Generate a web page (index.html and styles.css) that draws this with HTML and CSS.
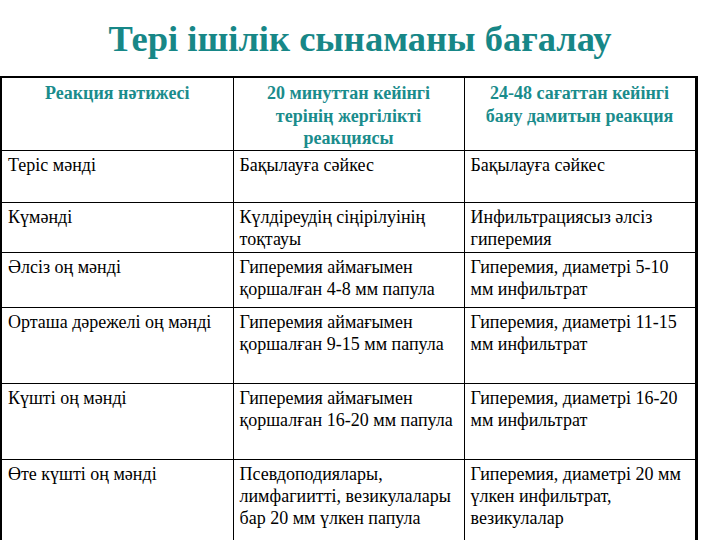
FILE: index.html
```html
<!DOCTYPE html>
<html lang="kk">
<head>
<meta charset="utf-8">
<title>Тері ішілік сынаманы бағалау</title>
<link rel="stylesheet" href="styles.css">
</head>
<body>
<h1 class="title">Тері ішілік сынаманы бағалау</h1>
<table class="grid">
  <colgroup><col class="c1"><col class="c2"><col class="c3"></colgroup>
  <tr class="r-head">
    <th>Реакция нәтижесі</th>
    <th>20 минуттан кейінгі<br>терінің жергілікті<br>реакциясы</th>
    <th>24-48 сағаттан кейінгі<br>баяу дамитын реакция</th>
  </tr>
  <tr class="r1">
    <td>Теріс мәнді</td>
    <td>Бақылауға сәйкес</td>
    <td>Бақылауға сәйкес</td>
  </tr>
  <tr class="r2">
    <td>Күмәнді</td>
    <td>Күлдіреудің сіңірілуінің<br>тоқтауы</td>
    <td>Инфильтрациясыз әлсіз<br>гиперемия</td>
  </tr>
  <tr class="r3">
    <td>Әлсіз оң мәнді</td>
    <td>Гиперемия аймағымен<br>қоршалған 4-8 мм папула</td>
    <td>Гиперемия, диаметрі 5-10<br>мм инфильтрат</td>
  </tr>
  <tr class="r4">
    <td>Орташа дәрежелі оң мәнді</td>
    <td>Гиперемия аймағымен<br>қоршалған 9-15 мм папула</td>
    <td>Гиперемия, диаметрі 11-15<br>мм инфильтрат</td>
  </tr>
  <tr class="r5">
    <td>Күшті оң мәнді</td>
    <td>Гиперемия аймағымен<br>қоршалған 16-20 мм папула</td>
    <td>Гиперемия, диаметрі 16-20<br>мм инфильтрат</td>
  </tr>
  <tr class="r6">
    <td>Өте күшті оң мәнді</td>
    <td>Псевдоподиялары,<br>лимфагиитті, везикулалары<br>бар 20 мм үлкен папула</td>
    <td>Гиперемия, диаметрі 20 мм<br>үлкен инфильтрат,<br>везикулалар</td>
  </tr>
</table>
</body>
</html>
```
FILE: styles.css
```css
html, body {
  margin: 0;
  padding: 0;
  background: #ffffff;
}
body {
  font-family: "Liberation Serif", "Times New Roman", serif;
  color: #000;
  overflow: hidden;
}
.title {
  margin: 0;
  height: 76px;
  box-sizing: border-box;
  padding-top: 19px;
  text-align: center;
  font-family: "Liberation Serif", "Times New Roman", serif;
  font-size: 36.5px;
  line-height: 40px;
  font-weight: bold;
  color: #178787;
}
.grid {
  border-collapse: collapse;
  width: 696px;
  table-layout: fixed;
  border-top: 2px solid #000;
  border-left: 2px solid #000;
  border-right: 3px solid #000;
}
.c1 { width: 232px; }
.c2 { width: 231px; }
.c3 { width: 232px; }
.grid th, .grid td {
  font-family: "Liberation Serif", "Times New Roman", serif;
  border: 1px solid #000;
  vertical-align: top;
  padding: 3px 6px 0 6px;
  font-size: 18px;
  line-height: 22px;
  text-align: left;
  white-space: nowrap;
}
.grid th {
  text-align: center;
  font-weight: bold;
  font-size: 18px;
  line-height: 22.5px;
  color: #1a8c8c;
  padding-top: 4px;
}
.r-head { height: 73px; }
.r1 { height: 52px; }
.r2 { height: 50px; }
.r3 { height: 55px; }
.r4 { height: 76px; }
.r5 { height: 76px; }
.r6 { height: 90px; }
```
